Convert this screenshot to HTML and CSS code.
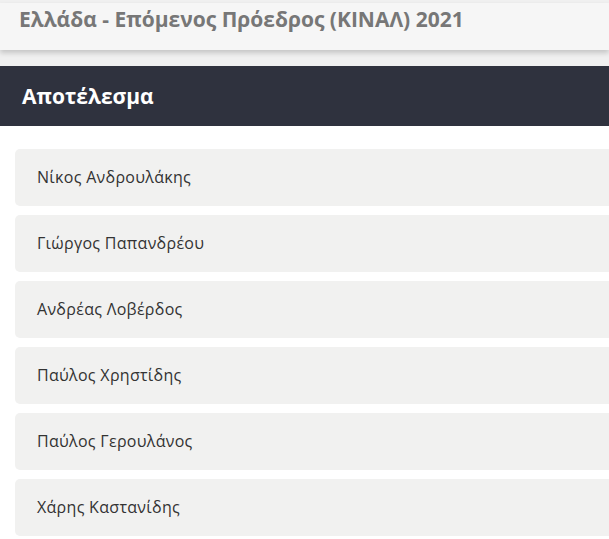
FILE: index.html
```html
<!DOCTYPE html>
<html>
<head>
<meta charset="utf-8">
<link rel="stylesheet" href="styles.css">
</head>
<body>
<div class="top">
  <div class="card">
    <h1 class="title">Ελλάδα - Επόμενος Πρόεδρος (ΚΙΝΑΛ) 2021</h1>
  </div>
</div>
<div class="bar"><h2 class="bar-title">Αποτέλεσμα</h2></div>
<ul class="list">
  <li class="item">Νίκος Ανδρουλάκης</li>
  <li class="item">Γιώργος Παπανδρέου</li>
  <li class="item">Ανδρέας Λοβέρδος</li>
  <li class="item">Παύλος Χρηστίδης</li>
  <li class="item">Παύλος Γερουλάνος</li>
  <li class="item">Χάρης Καστανίδης</li>
</ul>
</body>
</html>
```

FILE: styles.css
```css
html, body {
  margin: 0;
  padding: 0;
  background: #ffffff;
  font-family: "Open Sans", "Noto Sans", sans-serif;
}
.top {
  background: #f0f0f0;
  padding: 3px 0 16px;
}
.card {
  background: #f6f6f6;
  height: 47px;
  box-shadow: 0 3px 5px rgba(0,0,0,0.18);
  padding: 0 19px;
}
.title {
  margin: 0;
  font-size: 21px;
  font-weight: 700;
  color: #777777;
  line-height: 32px;
}
.bar {
  background: #2f323e;
  height: 60px;
  display: flex;
  align-items: center;
  padding: 0 22px;
}
.bar-title {
  margin: 0;
  font-size: 21px;
  font-weight: 700;
  color: #ffffff;
  line-height: 28px;
}
.list {
  list-style: none;
  margin: 0;
  padding: 23px 0 0 15px;
  display: flex;
  flex-direction: column;
  gap: 9px;
}
.item {
  background: #f1f1f0;
  height: 57px;
  box-sizing: border-box;
  padding-bottom: 2px;
  border-radius: 5px 0 0 5px;
  display: flex;
  align-items: center;
  padding-left: 22px;
  font-size: 16px;
  letter-spacing: 0.3px;
  color: #333333;
}
```
